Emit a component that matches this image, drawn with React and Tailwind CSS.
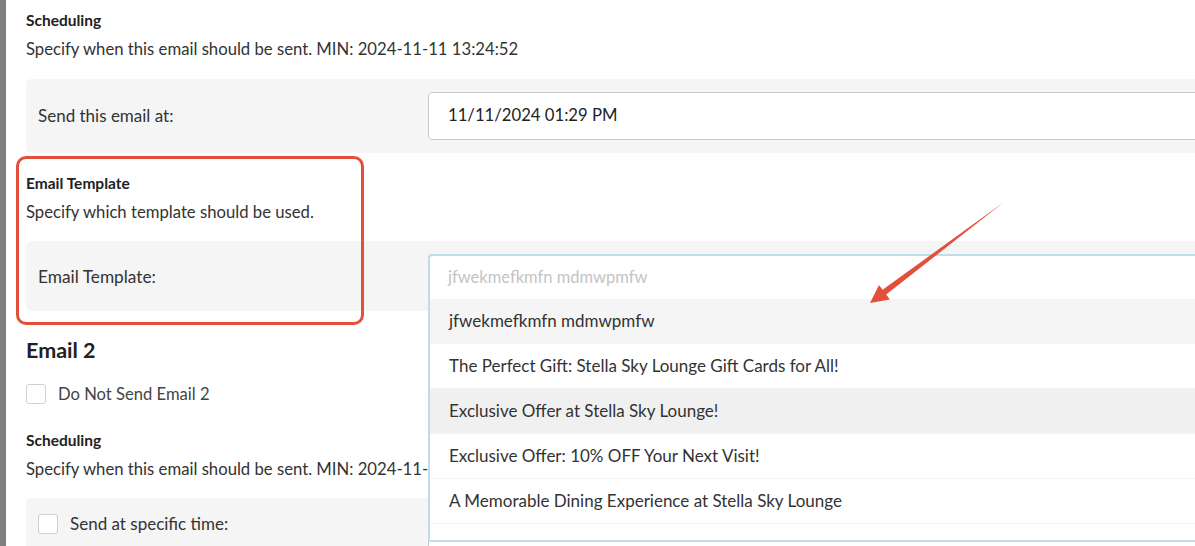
import React from 'react';

const templates = [
  'jfwekmefkmfn mdmwpmfw',
  'The Perfect Gift: Stella Sky Lounge Gift Cards for All!',
  'Exclusive Offer at Stella Sky Lounge!',
  'Exclusive Offer: 10% OFF Your Next Visit!',
  'A Memorable Dining Experience at Stella Sky Lounge',
];

const Checkbox = () => (
  <span className="inline-block w-5 h-5 rounded-[3px] border border-[#cfcfcf] bg-white shrink-0"></span>
);

const SectionHead = ({ title, desc, className = '' }) => (
  <div className={className}>
    <div className="text-[15.5px] leading-5 font-bold text-[#222]">{title}</div>
    <div className="mt-[9px] text-[16.7px] leading-5 text-[#333]">{desc}</div>
  </div>
);

const TemplateSelect = () => (
  <div className="relative">
    <div className="h-[45px] bg-white border-t-2 border-l-2 border-[#bcdde9] rounded-tl-[4px] flex items-center pl-[18px] text-[16.5px] text-[#c4c4c4]">
      jfwekmefkmfn mdmwpmfw
    </div>
    {/* dropdown list */}
    <div className="absolute left-0 right-0 top-full z-20 bg-white border-l-2 border-b-2 border-[#bcdde9] rounded-bl-[4px]">
      {templates.map((t, i) => (
        <div
          key={t}
          className={
            'h-[45px] flex items-center pl-[19px] text-[17px] text-[#333] border-b border-[#f3f3f3] ' +
            (i === 0 ? 'bg-[#f5f5f5]' : i === 2 ? 'bg-[#f0f0f0]' : 'bg-white')
          }
        >
          {t}
        </div>
      ))}
      <div className="h-[16px] bg-white"></div>
    </div>
  </div>
);

export default function App() {
  return (
    <div
      className="relative w-[1195px] h-[546px] overflow-hidden flex bg-white"
      style={{ fontFamily: 'Lato, "Open Sans", "Liberation Sans", sans-serif' }}
    >
      <div className="w-[6px] shrink-0 bg-[#7f7f7f]"></div>

      <div className="flex-1 pl-5 pt-[10px] mr-[-40px]">
        {/* Email 1 scheduling */}
        <SectionHead
          title="Scheduling"
          desc="Specify when this email should be sent. MIN: 2024-11-11 13:24:52"
        />
        <div className="mt-5 bg-[#f5f5f5] rounded-[5px] pl-3 pr-3 py-[13px] flex items-center">
          <div className="w-[390px] text-[17px] text-[#333]">Send this email at:</div>
          <div className="flex-1 h-[48px] bg-white border border-[#c9c9c9] rounded-[4px] flex items-center pl-[19px] text-[16.7px] text-[#222]">
            11/11/2024 01:29 PM
          </div>
        </div>

        {/* Email template */}
        <SectionHead
          className="mt-5"
          title="Email Template"
          desc="Specify which template should be used."
        />
        <div className="mt-[19px] bg-[#f5f5f5] rounded-[5px] pl-3 pr-3 pt-[13px] pb-[12px] flex items-center">
          <div className="w-[390px] text-[17.3px] text-[#333]">Email Template:</div>
          <div className="flex-1">
            <TemplateSelect />
          </div>
        </div>

        {/* Email 2 */}
        <h2 className="mt-[25px] text-[21.5px] leading-7 font-bold text-[#222]">Email 2</h2>
        <label className="mt-[18px] flex items-center gap-3 text-[16.6px] text-[#444]">
          <Checkbox />
          Do Not Send Email 2
        </label>

        <SectionHead
          className="mt-[23px]"
          title="Scheduling"
          desc="Specify when this email should be sent. MIN: 2024-11-11 13:24:52"
        />
        <div className="mt-[19px] bg-[#f5f5f5] rounded-[5px] pl-3 pr-3 py-[13px] flex items-start">
          <label className="w-[390px] flex items-center gap-3 text-[17px] text-[#333]">
            <Checkbox />
            Send at specific time:
          </label>
          <div className="flex-1 h-[48px] bg-white border border-[#c9c9c9] rounded-[4px]"></div>
        </div>
      </div>

      {/* annotation: highlight box */}
      <div className="absolute left-[16px] top-[156px] w-[348px] h-[169px] border-[3px] border-[#e2503c] rounded-[10px] pointer-events-none z-30"></div>

      {/* annotation: arrow */}
      <svg
        className="absolute left-0 top-0 pointer-events-none z-30"
        width="1195"
        height="546"
        viewBox="0 0 1195 546"
      >
        <polygon
          points="870,303 879,285 882.6,289.8 1004,202 886.2,294.6 889.8,299.4"
          fill="#e2503c"
        />
      </svg>
    </div>
  );
}
